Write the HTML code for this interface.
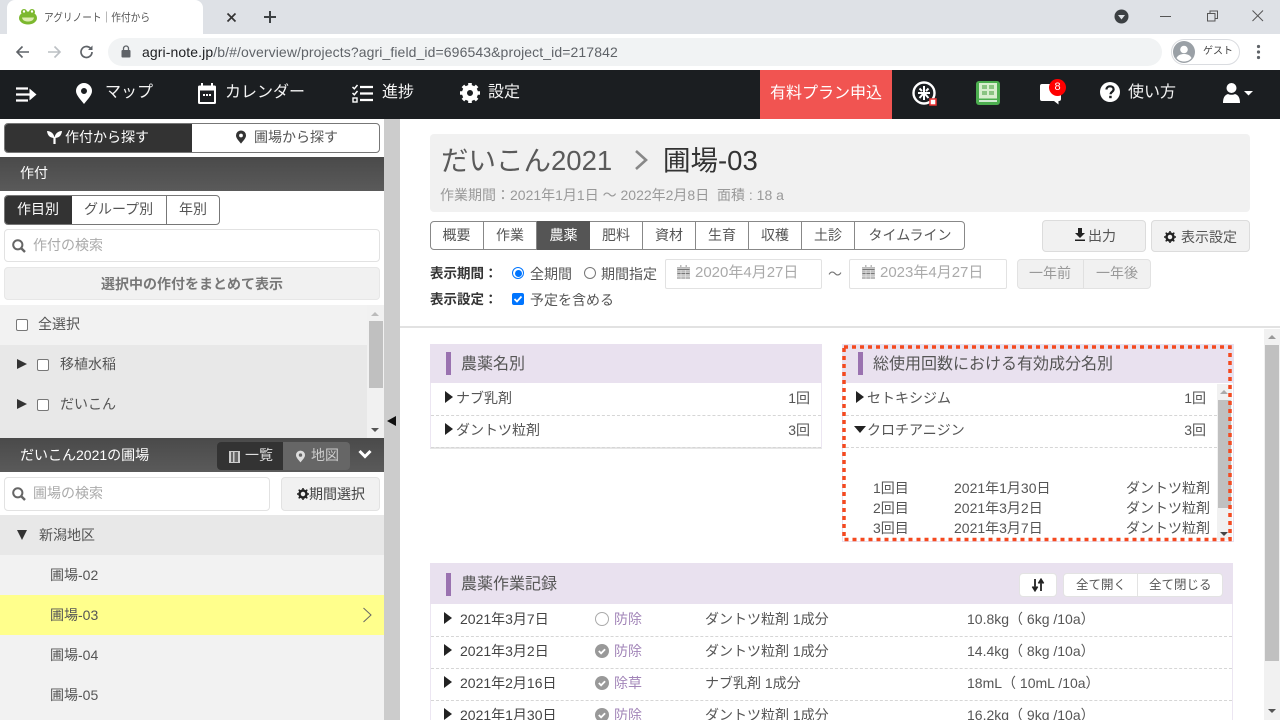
<!DOCTYPE html>
<html lang="ja"><head><meta charset="utf-8"><title>アグリノート</title>
<style>
html,body{margin:0;padding:0;width:1280px;height:720px;overflow:hidden;background:#fff}
body{position:relative;font-family:"Liberation Sans","Noto Sans CJK JP",sans-serif;font-size:14px;color:#555}
div,span,svg{position:absolute;box-sizing:border-box}
.t{white-space:nowrap;line-height:20px;height:20px}
.n{color:#f4f4f4;font-size:16px;line-height:24px;height:24px}
.tab{top:221px;height:29px;text-align:center;line-height:28px;font-size:14px;color:#555;border-right:1px solid #888}
.box{border:1px solid #e2e2e2;background:#fff;border-radius:2px}
.tri{width:0;height:0;border-left:8px solid #222;border-top:6px solid transparent;border-bottom:6px solid transparent}
.dash{height:0;border-top:1px dashed #d6d6d6}
.cb{width:12px;height:12px;border:1px solid #777;border-radius:2px;background:#fff}
.b{font-weight:bold;color:#333}
</style></head><body>

<!-- chrome -->
<div style="left:0;top:0;width:1280px;height:34px;background:#dee1e6"></div>
<div style="left:7px;top:0;width:196px;height:34px;background:#fff;border-radius:8px 8px 0 0"></div>
<svg style="left:19px;top:8px" width="18" height="17" viewBox="0 0 18 17"><circle cx="5" cy="4" r="3" fill="#7cb82f"/><circle cx="13" cy="4" r="3" fill="#7cb82f"/><ellipse cx="9" cy="10" rx="9" ry="6.500" fill="#7cb82f"/><circle cx="5" cy="3.500" r="1.200" fill="#fff"/><circle cx="13" cy="3.500" r="1.200" fill="#fff"/><path d="M3 9.500h12c-.5 3-3 4-6 4s-5.500-1-6-4z" fill="#dcecb0"/></svg>
<div class="t" style="left:44px;top:8px;font-size:11px;color:#555;transform:scaleX(.88);transform-origin:left center">アグリノート｜作付から</div>
<svg style="left:226px;top:12px" width="11" height="11" viewBox="0 0 11 11"><path d="M1.500 1.500l8 8M9.500 1.500l-8 8" stroke="#333" stroke-width="1.700"/></svg>
<svg style="left:263px;top:10px" width="14" height="14" viewBox="0 0 14 14"><path d="M7 1v12M1 7h12" stroke="#3c4043" stroke-width="2"/></svg>
<svg style="left:1114px;top:9px" width="15" height="15" viewBox="0 0 15 15"><circle cx="7.500" cy="7.500" r="7" fill="#3c4043"/><path d="M4 6h7l-3.500 4.500z" fill="#dee1e6"/></svg>
<svg style="left:1160px;top:10px" width="104" height="12" viewBox="0 0 104 12"><path d="M0 6.500h11" stroke="#555" stroke-width="1"/><path d="M47.500 3.500h7.500v7.500h-7.500zM50 3.500v-2.500h7.500v7.500h-2.500" fill="none" stroke="#555" stroke-width="1"/><path d="M92.500.5l10.500 10.500M103 .5L92.500 11" stroke="#555" stroke-width="1"/></svg>
<div style="left:108px;top:38px;width:1054px;height:28px;background:#f1f3f4;border-radius:14px"></div>
<svg style="left:15px;top:44px" width="80" height="16" viewBox="0 0 80 16"><path d="M14 8H2M7.500 2.500L2 8l5.500 5.500" fill="none" stroke="#5f6368" stroke-width="1.600"/><path d="M33 8h12M39.500 2.500L45 8l-5.500 5.500" fill="none" stroke="#bcc0c4" stroke-width="1.600"/><path d="M77 8a5.500 5.500 0 1 1-1.700-4" fill="none" stroke="#5f6368" stroke-width="1.700"/><path d="M77.500 1.500v4.500h-4.500z" fill="#5f6368"/></svg>
<svg style="left:121px;top:45px" width="10" height="13" viewBox="0 0 10 13"><path d="M2.500 5V3.500a2.500 2.500 0 0 1 5 0V5" fill="none" stroke="#5f6368" stroke-width="1.300"/><rect x=".5" y="5" width="9" height="7.500" rx="1" fill="#5f6368"/></svg>
<div class="t" style="left:142px;top:42px;font-size:14px;color:#5f6368;letter-spacing:.1px"><span style="position:static;color:#202124">agri-note.jp</span>/b/#/overview/projects?agri_field_id=696543&amp;project_id=217842</div>
<div style="left:1171px;top:39px;width:69px;height:26px;border:1px solid #dadce0;border-radius:13px;background:#fff"></div>
<svg style="left:1173px;top:41px" width="22" height="22" viewBox="0 0 22 22"><circle cx="11" cy="11" r="11" fill="#9aa0a6"/><circle cx="11" cy="8.500" r="3.800" fill="#fff"/><path d="M3.500 17c1.500-3 4.500-4 7.500-4s6 1 7.500 4c-2 2.500-4.500 3.500-7.500 3.500s-5.500-1-7.500-3.500z" fill="#fff"/></svg>
<div class="t" style="left:1203px;top:42px;font-size:10px;color:#444">ゲスト</div>
<svg style="left:1256px;top:44px" width="5" height="16" viewBox="0 0 5 16"><circle cx="2.500" cy="2.500" r="1.600" fill="#5f6368"/><circle cx="2.500" cy="8" r="1.600" fill="#5f6368"/><circle cx="2.500" cy="13.500" r="1.600" fill="#5f6368"/></svg>

<!-- nav -->
<div style="left:0;top:70px;width:1280px;height:49px;background:#1b1e21"></div>
<svg style="left:16px;top:87px" width="21" height="15" viewBox="0 0 21 15"><path d="M0 1.500h12M0 7.500h15M0 13.500h12" stroke="#fff" stroke-width="2.200"/><path d="M13.500 1.500l7 6-7 6z" fill="#fff"/></svg>
<svg style="left:76px;top:83px" width="16" height="21" viewBox="0 0 16 21"><path fill-rule="evenodd" d="M8 0a8 8 0 0 1 8 8c0 4-4 8-8 13-4-5-8-9-8-13a8 8 0 0 1 8-8zm0 5a3 3 0 1 0 0 6 3 3 0 0 0 0-6z" fill="#fff"/></svg>
<div class="t n" style="left:105px;top:81px">マップ</div>
<svg style="left:198px;top:83px" width="18" height="21" viewBox="0 0 18 21"><path fill-rule="evenodd" d="M3 0h2v2.500h8V0h2v2.500h1.500A1.500 1.500 0 0 1 18 4v15.500a1.500 1.500 0 0 1-1.500 1.500h-15A1.500 1.500 0 0 1 0 19.500V4a1.500 1.500 0 0 1 1.500-1.500H3zM2 7.500v11.500h14V7.500z" fill="#fff"/><path d="M5 11h2v2H5zM8 11h2v2H8zM11 11h2v2h-2z" fill="#fff"/></svg>
<div class="t n" style="left:225px;top:81px">カレンダー</div>
<svg style="left:352px;top:84px" width="21" height="19" viewBox="0 0 21 19"><path d="M8 3h13M8 9.500h13M8 16h13" stroke="#fff" stroke-width="2.200"/><path d="M.5 3l1.800 1.800L5.500 1M.5 9l1.800 1.800L5.500 7" fill="none" stroke="#fff" stroke-width="1.500"/><rect x="1" y="14" width="4" height="4" fill="none" stroke="#fff" stroke-width="1.400"/></svg>
<div class="t n" style="left:382px;top:81px">進捗</div>
<svg style="left:460px;top:83px" width="20" height="20" viewBox="0 0 20 20"><circle cx="10" cy="10" r="5.500" fill="none" stroke="#fff" stroke-width="5"/><path d="M10 0v4M10 16v4M0 10h4M16 10h4M2.900 2.900l2.800 2.800M14.300 14.300l2.800 2.800M2.900 17.100l2.800-2.800M14.300 5.700l2.800-2.800" stroke="#fff" stroke-width="3.600"/></svg>
<div class="t n" style="left:488px;top:81px">設定</div>
<div style="left:760px;top:70px;width:132px;height:49px;background:#f15451;color:#fff;font-size:16px;line-height:47px;text-align:center">有料プラン申込</div>
<svg style="left:912px;top:81px" width="25" height="25" viewBox="0 0 25 25"><circle cx="12" cy="12" r="10.500" fill="none" stroke="#fff" stroke-width="2.400"/><path d="M12 5v14M6 12h12M7.500 7.500l2.500 2.500M16.500 7.500L14 10M7.500 17L11 13M16.500 17L13 13" stroke="#fff" stroke-width="2"/><rect x="18" y="18" width="6" height="6" fill="#fff" stroke="#e33" stroke-width="1.500"/></svg>
<svg style="left:976px;top:81px" width="24" height="24" viewBox="0 0 24 24"><rect width="24" height="24" rx="3" fill="#4cae4f"/><rect x="3" y="2" width="18" height="15.500" fill="#d8eecf"/><path d="M6 5h5M13 5h5M6 7h5M13 7h5M6 11h5M13 11h5M6 13h5M13 13h5" stroke="#5cac55" stroke-width="1.300"/><path d="M3 20h18" stroke="#fff" stroke-width="1.600"/></svg>
<svg style="left:1040px;top:84px" width="21" height="21" viewBox="0 0 21 21"><path d="M2 0h17a2 2 0 0 1 2 2v13a2 2 0 0 1-2 2h-.5v3.500L14 17H2a2 2 0 0 1-2-2V2a2 2 0 0 1 2-2z" fill="#fff"/></svg>
<div style="left:1049px;top:79px;width:17px;height:17px;background:#f00;border-radius:50%;color:#fff;font-size:11px;line-height:17px;text-align:center">8</div>
<svg style="left:1100px;top:82px" width="20" height="20" viewBox="0 0 20 20"><circle cx="10" cy="10" r="10" fill="#fff"/><path d="M6.500 7.500C6.500 5.500 8 4.300 10.100 4.300c2.100 0 3.500 1.200 3.500 3 0 2.700-3 2.500-3 5" fill="none" stroke="#1b1e21" stroke-width="2.200"/><rect x="9.200" y="13.800" width="2.500" height="2.400" fill="#1b1e21"/></svg>
<div class="t n" style="left:1128px;top:81px">使い方</div>
<svg style="left:1223px;top:83px" width="30" height="20" viewBox="0 0 30 20"><circle cx="8.500" cy="5" r="5" fill="#fff"/><path d="M0 20c0-5 1.500-8 5-9 2 1 5 1 7 0 3.500 1 5 4 5 9z" fill="#fff"/><path d="M21 8h9l-4.500 4.500z" fill="#fff"/></svg>

<!-- sidebar -->
<div style="left:384px;top:119px;width:16px;height:601px;background:#ccc"></div>
<div style="left:387px;top:416px;width:0;height:0;border-right:9px solid #111;border-top:5px solid transparent;border-bottom:5px solid transparent"></div>
<div style="left:4px;top:123px;width:376px;height:30px;border:1px solid #777;border-radius:4px;background:#fff;overflow:hidden"><div style="left:-1px;top:-1px;width:188px;height:30px;background:#333"></div></div>
<svg style="left:47px;top:130px" width="15" height="15" viewBox="0 0 15 15"><path d="M7.500 14V7" stroke="#fff" stroke-width="2.200"/><path d="M7.500 8C3 8 .5 5.500 0 1c4 .2 7 2.500 7.500 7zM7.500 8c4.500 0 7-2.500 7.500-7-4 .2-7 2.500-7.500 7z" fill="#fff"/></svg>
<div class="t" style="left:65px;top:127px;color:#fff">作付から探す</div>
<svg style="left:236px;top:130px" width="10" height="14" viewBox="0 0 16 21"><path fill-rule="evenodd" d="M8 0a8 8 0 0 1 8 8c0 4-4 8-8 13-4-5-8-9-8-13a8 8 0 0 1 8-8zm0 5a3 3 0 1 0 0 6 3 3 0 0 0 0-6z" fill="#333"/></svg>
<div class="t" style="left:254px;top:127px;color:#555">圃場から探す</div>
<div style="left:0;top:157px;width:384px;height:34px;background:linear-gradient(#4a4a4a,#5a5a5a)"></div>
<div class="t" style="left:20px;top:163px;color:#fff">作付</div>
<div style="left:4px;top:195px;width:216px;height:30px;border:1px solid #777;border-radius:4px;background:#fff;overflow:hidden"><div style="left:-1px;top:-1px;width:68px;height:30px;background:#333"></div><div style="left:161px;top:0;width:1px;height:28px;background:#777"></div></div>
<div class="t" style="left:17px;top:199px;color:#fff">作目別</div>
<div class="t" style="left:84px;top:199px">グループ別</div>
<div class="t" style="left:179px;top:199px">年別</div>
<div style="left:4px;top:229px;width:376px;height:33px;border:1px solid #e2e2e2;border-radius:4px"></div>
<svg style="left:12px;top:239px" width="14" height="14" viewBox="0 0 14 14"><circle cx="5.800" cy="5.800" r="4.600" fill="none" stroke="#666" stroke-width="2"/><path d="M9 9l4 4" stroke="#666" stroke-width="2.400"/></svg>
<div class="t" style="left:33px;top:235px;color:#aaa">作付の検索</div>
<div style="left:4px;top:267px;width:376px;height:33px;background:#f1f1f1;border:1px solid #e7e7e7;border-radius:4px;text-align:center;line-height:33px;font-weight:bold;color:#777">選択中の作付をまとめて表示</div>
<div style="left:0;top:305px;width:367px;height:40px;background:#f2f2f2"></div>
<div style="left:0;top:345px;width:367px;height:93px;background:#e8e8e8"></div>
<div style="left:367px;top:305px;width:17px;height:133px;background:#f1f1f1"></div>
<div style="left:369px;top:321px;width:14px;height:67px;background:#c0c0c0"></div>
<div style="left:371px;top:312px;width:0;height:0;border-bottom:4px solid #bbb;border-left:4px solid transparent;border-right:4px solid transparent"></div>
<div style="left:371px;top:428px;width:0;height:0;border-top:4px solid #555;border-left:4px solid transparent;border-right:4px solid transparent"></div>
<div class="cb" style="left:16px;top:319px"></div><div class="t" style="left:38px;top:314px">全選択</div>
<div style="left:17px;top:359px;width:0;height:0;border-left:10px solid #333;border-top:5px solid transparent;border-bottom:5px solid transparent"></div>
<div class="cb" style="left:37px;top:359px"></div><div class="t" style="left:60px;top:354px">移植水稲</div>
<div style="left:17px;top:399px;width:0;height:0;border-left:10px solid #333;border-top:5px solid transparent;border-bottom:5px solid transparent"></div>
<div class="cb" style="left:37px;top:399px"></div><div class="t" style="left:60px;top:394px">だいこん</div>
<div style="left:0;top:438px;width:384px;height:34px;background:linear-gradient(#4a4a4a,#5a5a5a)"></div>
<div class="t" style="left:20px;top:445px;color:#fff;font-size:14px">だいこん2021の圃場</div>
<div style="left:217px;top:442px;width:133px;height:28px;background:#666;border-radius:4px;overflow:hidden"><div style="left:0;top:0;width:66px;height:28px;background:#333"></div></div>
<svg style="left:229px;top:451px" width="11" height="12" viewBox="0 0 11 12"><rect width="11" height="12" fill="#ccc"/><path d="M2 1h2v10H2zM5.500 1H9v10H5.500z" fill="#666"/></svg>
<div class="t" style="left:245px;top:445px;color:#ddd">一覧</div>
<svg style="left:296px;top:450px" width="9" height="13" viewBox="0 0 16 21"><path fill-rule="evenodd" d="M8 0a8 8 0 0 1 8 8c0 4-4 8-8 13-4-5-8-9-8-13a8 8 0 0 1 8-8zm0 5a3 3 0 1 0 0 6 3 3 0 0 0 0-6z" fill="#ddd"/></svg>
<div class="t" style="left:311px;top:445px;color:#ccc">地図</div>
<svg style="left:358px;top:449px" width="14" height="10" viewBox="0 0 14 10"><path d="M1.500 2L7 7.500 12.500 2" fill="none" stroke="#fff" stroke-width="3"/></svg>
<div style="left:4px;top:477px;width:266px;height:34px;border:1px solid #e2e2e2;border-radius:4px"></div>
<svg style="left:12px;top:487px" width="14" height="14" viewBox="0 0 14 14"><circle cx="5.800" cy="5.800" r="4.600" fill="none" stroke="#666" stroke-width="2"/><path d="M9 9l4 4" stroke="#666" stroke-width="2.400"/></svg>
<div class="t" style="left:33px;top:483px;color:#aaa">圃場の検索</div>
<div style="left:281px;top:477px;width:99px;height:34px;background:#f1f1f1;border:1px solid #e2e2e2;border-radius:4px"></div>
<svg style="left:297px;top:488px" width="12" height="12" viewBox="0 0 12 12"><circle cx="6" cy="6" r="3.500" fill="none" stroke="#222" stroke-width="2.500"/><path d="M6 0v2M6 10v2M0 6h2M10 6h2M1.700 1.700l1.400 1.400M8.900 8.900l1.400 1.400M1.700 10.300l1.400-1.400M8.900 3.100l1.400-1.400" stroke="#222" stroke-width="1.500"/></svg>
<div class="t" style="left:309px;top:484px;color:#444">期間選択</div>
<div style="left:0;top:515px;width:384px;height:40px;background:#e8e8e8"></div>
<div style="left:17px;top:530px;width:0;height:0;border-top:10px solid #333;border-left:5px solid transparent;border-right:5px solid transparent"></div>
<div class="t" style="left:39px;top:525px">新潟地区</div>
<div style="left:0;top:555px;width:384px;height:165px;background:#f2f2f2"></div>
<div style="left:0;top:595px;width:384px;height:40px;background:#ffff8c"></div>
<div class="t" style="left:50px;top:565px">圃場-02</div>
<div class="t" style="left:50px;top:605px">圃場-03</div>
<div class="t" style="left:50px;top:645px">圃場-04</div>
<div class="t" style="left:50px;top:685px">圃場-05</div>
<svg style="left:362px;top:607px" width="10" height="16" viewBox="0 0 10 16"><path d="M1.500 1l7.500 7-7.500 7" fill="none" stroke="#666" stroke-width="1"/></svg>

<!-- title -->
<div style="left:430px;top:134px;width:820px;height:78px;background:#f1f1f1;border-radius:4px"></div>
<div class="t" style="left:441px;top:144px;height:34px;line-height:34px;font-size:27.500px;color:#5a5a5a">だいこん2021</div>
<svg style="left:633px;top:149px" width="16" height="22" viewBox="0 0 16 22"><path d="M3 2l10 9-10 9" fill="none" stroke="#888" stroke-width="2.600"/></svg>
<div class="t" style="left:663px;top:144px;height:34px;line-height:34px;font-size:27.500px;color:#333">圃場-03</div>
<div class="t" style="left:440px;top:185px;font-size:14px;color:#999">作業期間：2021年1月1日 ～ 2022年2月8日&nbsp; 面積 : 18 a</div>

<!-- tabs -->
<div style="left:430px;top:221px;width:535px;height:29px;border:1px solid #888;border-radius:4px;background:#fff"></div>
<div style="left:536px;top:221px;width:54px;height:29px;background:#555"></div>
<div class="tab" style="left:430px;width:54px">概要</div>
<div class="tab" style="left:484px;width:53px">作業</div>
<div class="tab" style="left:537px;width:53px;color:#fff;border-right:0">農薬</div>
<div class="tab" style="left:590px;width:53px">肥料</div>
<div class="tab" style="left:643px;width:53px">資材</div>
<div class="tab" style="left:696px;width:53px">生育</div>
<div class="tab" style="left:749px;width:53px">収穫</div>
<div class="tab" style="left:802px;width:53px">土診</div>
<div class="tab" style="left:855px;width:110px;border-right:0">タイムライン</div>
<div style="left:1042px;top:220px;width:104px;height:32px;background:#f1f1f1;border:1px solid #dcdcdc;border-radius:4px"></div>
<svg style="left:1074px;top:228px" width="12" height="13" viewBox="0 0 12 13"><path d="M4 0h4v5h3L6 10 1 5h3zM1 11.500h10v1.500H1z" fill="#222"/></svg>
<div class="t" style="left:1088px;top:226px">出力</div>
<div style="left:1151px;top:220px;width:99px;height:32px;background:#f1f1f1;border:1px solid #dcdcdc;border-radius:4px"></div>
<svg style="left:1164px;top:231px" width="12" height="12" viewBox="0 0 12 12"><circle cx="6" cy="6" r="3.500" fill="none" stroke="#222" stroke-width="2.500"/><path d="M6 0v2M6 10v2M0 6h2M10 6h2M1.700 1.700l1.400 1.400M8.900 8.900l1.400 1.400M1.700 10.300l1.400-1.400M8.900 3.100l1.400-1.400" stroke="#222" stroke-width="1.500"/></svg>
<div class="t" style="left:1181px;top:227px">表示設定</div>

<!-- filters -->
<div class="t b" style="left:430px;top:264px;font-size:13.500px">表示期間：</div>
<div style="left:512px;top:267px;width:12px;height:12px;border:1px solid #0075ff;border-radius:50%;background:#fff"></div>
<div style="left:514.500px;top:269.500px;width:7px;height:7px;background:#0075ff;border-radius:50%"></div>
<div class="t" style="left:530px;top:264px">全期間</div>
<div style="left:584px;top:267px;width:12px;height:12px;border:1px solid #777;border-radius:50%;background:#fff"></div>
<div class="t" style="left:601px;top:264px">期間指定</div>
<div class="box" style="left:665px;top:259px;width:157px;height:30px"></div>
<svg style="left:677px;top:265px" width="13" height="14" viewBox="0 0 13 14"><path d="M0 2h13v12H0z" fill="#bbb"/><path d="M3 0h1.500v3H3zM8.500 0H10v3H8.500z" fill="#bbb"/><path d="M0 4h13v1H0zM0 8h13v1H0zM0 11h13v.7H0zM4 5v9M8.500 5v9" stroke="#eee" stroke-width=".6"/></svg>
<div class="t" style="left:695px;top:263px;color:#aaa;font-size:15px">2020年4月27日</div>
<div class="t" style="left:828px;top:264px;color:#777">～</div>
<div class="box" style="left:849px;top:259px;width:158px;height:30px"></div>
<svg style="left:862px;top:265px" width="13" height="14" viewBox="0 0 13 14"><path d="M0 2h13v12H0z" fill="#bbb"/><path d="M3 0h1.500v3H3zM8.500 0H10v3H8.500z" fill="#bbb"/><path d="M0 4h13v1H0zM0 8h13v1H0zM0 11h13v.7H0zM4 5v9M8.500 5v9" stroke="#eee" stroke-width=".6"/></svg>
<div class="t" style="left:880px;top:263px;color:#aaa;font-size:15px">2023年4月27日</div>
<div style="left:1017px;top:259px;width:134px;height:30px;background:#f1f1f1;border:1px solid #e2e2e2;border-radius:4px"></div>
<div style="left:1083px;top:260px;width:1px;height:28px;background:#e0e0e0"></div>
<div class="t" style="left:1029px;top:263px;color:#999">一年前</div>
<div class="t" style="left:1096px;top:263px;color:#999">一年後</div>
<div class="t b" style="left:430px;top:290px;font-size:13.500px">表示設定：</div>
<div style="left:512px;top:293px;width:12px;height:12px;background:#0075ff;border-radius:2px"></div>
<svg style="left:512px;top:293px" width="12" height="12" viewBox="0 0 12 12"><path d="M2.500 6l2.500 2.500 4.500-5" fill="none" stroke="#fff" stroke-width="1.800"/></svg>
<div class="t" style="left:530px;top:290px">予定を含める</div>
<div style="left:400px;top:326px;width:880px;height:2px;background:#e2e2e2"></div>

<!-- main scrollbar -->
<div style="left:1264px;top:329px;width:16px;height:391px;background:#f1f1f1"></div>
<div style="left:1265px;top:345px;width:14px;height:316px;background:#c0c0c0"></div>
<div style="left:1268px;top:335px;width:0;height:0;border-bottom:4px solid #999;border-left:4px solid transparent;border-right:4px solid transparent"></div>
<div style="left:1268px;top:709px;width:0;height:0;border-top:4px solid #555;border-left:4px solid transparent;border-right:4px solid transparent"></div>

<!-- panel 1 -->
<div style="left:430px;top:344px;width:392px;height:105px;border:1px solid #ece6f2;border-bottom:2px solid #e6e6e6;background:#fff"></div>
<div style="left:430px;top:344px;width:392px;height:39px;background:#e9e1ef"></div>
<div style="left:446px;top:352px;width:5px;height:23px;background:#9a72b0"></div>
<div class="t" style="left:461px;top:355px;font-size:16px">農薬名別</div>
<div class="tri" style="left:445px;top:391px"></div><div class="t" style="left:456px;top:388px">ナブ乳剤</div><div class="t" style="right:470px;top:388px">1回</div>
<div class="dash" style="left:431px;top:415px;width:390px"></div>
<div class="tri" style="left:445px;top:423px"></div><div class="t" style="left:456px;top:420px">ダントツ粒剤</div><div class="t" style="right:470px;top:420px">3回</div>
<div class="dash" style="left:431px;top:447px;width:390px"></div>

<!-- panel 2 -->
<div style="left:842px;top:344px;width:392px;height:198px;border:1px solid #e9e1ef;background:#fff"></div>
<div style="left:843px;top:345px;width:390px;height:38px;background:#e9e1ef"></div>
<div style="left:858px;top:352px;width:5px;height:23px;background:#9a72b0"></div>
<div class="t" style="left:873px;top:355px;font-size:16px">総使用回数における有効成分名別</div>
<div class="tri" style="left:856px;top:391px"></div><div class="t" style="left:867px;top:388px">セトキシジム</div><div class="t" style="right:74px;top:388px">1回</div>
<div class="dash" style="left:846px;top:415px;width:371px"></div>
<div style="left:854px;top:426px;width:0;height:0;border-top:7px solid #222;border-left:6px solid transparent;border-right:6px solid transparent"></div><div class="t" style="left:867px;top:420px">クロチアニジン</div><div class="t" style="right:74px;top:420px">3回</div>
<div class="dash" style="left:846px;top:447px;width:371px"></div>
<div class="t" style="left:873px;top:478px">1回目</div><div class="t" style="left:954px;top:478px">2021年1月30日</div><div class="t" style="right:70px;top:478px">ダントツ粒剤</div>
<div class="t" style="left:873px;top:498px">2回目</div><div class="t" style="left:954px;top:498px">2021年3月2日</div><div class="t" style="right:70px;top:498px">ダントツ粒剤</div>
<div class="t" style="left:873px;top:518px">3回目</div><div class="t" style="left:954px;top:518px">2021年3月7日</div><div class="t" style="right:70px;top:518px">ダントツ粒剤</div>
<div style="left:1217px;top:384px;width:15px;height:156px;background:#f1f1f1"></div>
<div style="left:1218px;top:400px;width:13px;height:108px;background:#c0c0c0"></div>
<div style="left:1220px;top:390px;width:0;height:0;border-bottom:4px solid #aaa;border-left:4px solid transparent;border-right:4px solid transparent"></div>
<div style="left:1220px;top:532px;width:0;height:0;border-top:4px solid #444;border-left:4px solid transparent;border-right:4px solid transparent"></div>
<svg style="left:842px;top:345px" width="391" height="197" viewBox="0 0 391 197"><rect x="2" y="2" width="386" height="192.500" fill="none" stroke="#f4491f" stroke-width="3.500" stroke-dasharray="4 4"/></svg>

<!-- panel 3 -->
<div style="left:430px;top:563px;width:803px;height:157px;border:1px solid #ece6f2;border-bottom:0;background:#fff"></div>
<div style="left:430px;top:563px;width:803px;height:41px;background:#e9e1ef"></div>
<div style="left:446px;top:573px;width:5px;height:23px;background:#9a72b0"></div>
<div class="t" style="left:461px;top:575px;font-size:16px">農薬作業記録</div>
<div style="left:1019px;top:573px;width:38px;height:24px;background:#fff;border:1px solid #e3e3e3;border-radius:4px"></div>
<svg style="left:1031px;top:578px" width="14" height="14" viewBox="0 0 14 14"><path d="M4 1v10M1.500 8.500L4 12.500 6.500 8.500M10 13V3M7.500 5.500L10 1.500l2.500 4" fill="none" stroke="#222" stroke-width="1.800"/></svg>
<div style="left:1063px;top:573px;width:160px;height:24px;background:#fff;border:1px solid #e3e3e3;border-radius:4px"></div>
<div style="left:1137px;top:574px;width:1px;height:22px;background:#e3e3e3"></div>
<div class="t" style="left:1076px;top:575px;font-size:12.500px">全て開く</div>
<div class="t" style="left:1149px;top:575px;font-size:12.500px">全て閉じる</div>

<div class="tri" style="left:444px;top:612px"></div><div class="t" style="left:460px;top:609px;color:#444">2021年3月7日</div>
<div style="left:595px;top:612px;width:14px;height:14px;border:1.500px solid #aaa;border-radius:50%"></div>
<div class="t" style="left:614px;top:609px;color:#a285b8">防除</div><div class="t" style="left:705px;top:609px">ダントツ粒剤 1成分</div><div class="t" style="left:967px;top:609px">10.8kg（ 6kg /10a）</div>
<div class="dash" style="left:431px;top:636px;width:801px"></div>

<div class="tri" style="left:444px;top:644px"></div><div class="t" style="left:460px;top:641px;color:#444">2021年3月2日</div>
<svg style="left:595px;top:644px" width="14" height="14" viewBox="0 0 14 14"><circle cx="7" cy="7" r="7" fill="#999"/><path d="M3.800 7l2.300 2.300 4-4" fill="none" stroke="#fff" stroke-width="1.800"/></svg>
<div class="t" style="left:614px;top:641px;color:#a285b8">防除</div><div class="t" style="left:705px;top:641px">ダントツ粒剤 1成分</div><div class="t" style="left:967px;top:641px">14.4kg（ 8kg /10a）</div>
<div class="dash" style="left:431px;top:668px;width:801px"></div>

<div class="tri" style="left:444px;top:676px"></div><div class="t" style="left:460px;top:673px;color:#444">2021年2月16日</div>
<svg style="left:595px;top:676px" width="14" height="14" viewBox="0 0 14 14"><circle cx="7" cy="7" r="7" fill="#999"/><path d="M3.800 7l2.300 2.300 4-4" fill="none" stroke="#fff" stroke-width="1.800"/></svg>
<div class="t" style="left:614px;top:673px;color:#a285b8">除草</div><div class="t" style="left:705px;top:673px">ナブ乳剤 1成分</div><div class="t" style="left:967px;top:673px">18mL（ 10mL /10a）</div>
<div class="dash" style="left:431px;top:700px;width:801px"></div>

<div class="tri" style="left:444px;top:708px"></div><div class="t" style="left:460px;top:705px;color:#444">2021年1月30日</div>
<svg style="left:595px;top:708px" width="14" height="14" viewBox="0 0 14 14"><circle cx="7" cy="7" r="7" fill="#999"/><path d="M3.800 7l2.300 2.300 4-4" fill="none" stroke="#fff" stroke-width="1.800"/></svg>
<div class="t" style="left:614px;top:705px;color:#a285b8">防除</div><div class="t" style="left:705px;top:705px">ダントツ粒剤 1成分</div><div class="t" style="left:967px;top:705px">16.2kg（ 9kg /10a）</div>
</body></html>
